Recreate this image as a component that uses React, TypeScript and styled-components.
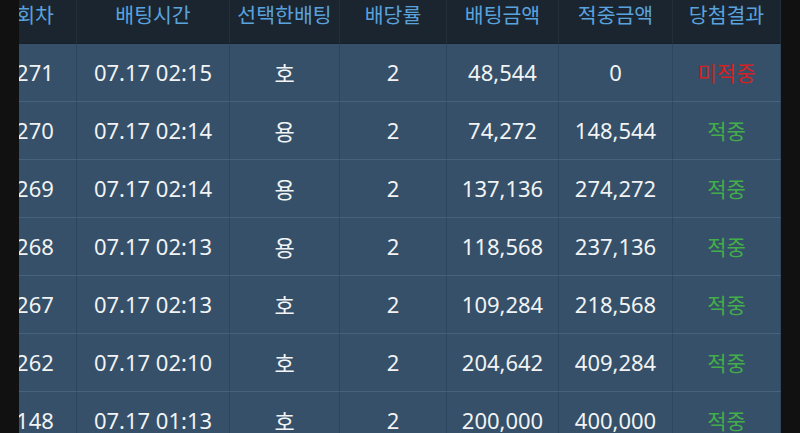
import React from "react";
import styled, { createGlobalStyle } from "styled-components";

const Global = createGlobalStyle`
  html, body { margin: 0; padding: 0; background: #111111; }
  body { font-family: "Noto Sans", "Noto Sans CJK KR", sans-serif; }
`;

const Screen = styled.div`
  width: 800px;
  height: 433px;
  display: flex;
  background: #111111;
  overflow: hidden;
`;

const Side = styled.div`
  width: 19px;
  flex: none;
  background: #111111;
`;

const Viewport = styled.div`
  width: 762px;
  flex: none;
  overflow: hidden;
  background: #355068;
`;

const COLS = "83px 153px 110px 107px 112px 114px 108px";

const Grid = styled.div`
  margin-left: -25px;
  width: 787px;
  display: grid;
  grid-template-columns: ${COLS};
`;

const HeadCell = styled.div`
  height: 44px;
  box-sizing: border-box;
  padding-top: 1px;
  display: flex;
  align-items: flex-start;
  justify-content: center;
  background: #1b2530;
  border-right: 1px solid #222e3a;
  border-bottom: 1px solid #18212a;
  color: #5aa2dc;
  font-size: 20.5px;
  line-height: 28px;
  white-space: nowrap;
  &:last-child { border-right: none; }
`;

const Cell = styled.div<{ $tone?: "win" | "lose" }>`
  height: 58px;
  box-sizing: border-box;
  padding-bottom: 2px;
  display: flex;
  align-items: center;
  justify-content: center;
  border-right: 1px solid #2e465b;
  border-bottom: 1px solid #46637d;
  color: ${(p) => (p.$tone === "win" ? "#43ad4a" : p.$tone === "lose" ? "#d42224" : "#f1f3f4")};
  font-size: ${(p) => (p.$tone ? "21px" : "22px")};
  white-space: nowrap;
`;

type Row = [string, string, string, string, string, string, "win" | "lose"];

const rows: Row[] = [
  ["271", "07.17 02:15", "호", "2", "48,544", "0", "lose"],
  ["270", "07.17 02:14", "용", "2", "74,272", "148,544", "win"],
  ["269", "07.17 02:14", "용", "2", "137,136", "274,272", "win"],
  ["268", "07.17 02:13", "용", "2", "118,568", "237,136", "win"],
  ["267", "07.17 02:13", "호", "2", "109,284", "218,568", "win"],
  ["262", "07.17 02:10", "호", "2", "204,642", "409,284", "win"],
  ["148", "07.17 01:13", "호", "2", "200,000", "400,000", "win"],
];

const heads = ["회차", "배팅시간", "선택한배팅", "배당률", "배팅금액", "적중금액", "당첨결과"];

export default function App() {
  return (
    <>
      <Global />
      <Screen>
        <Side />
        <Viewport>
          <Grid>
            {heads.map((h) => (
              <HeadCell key={h}>{h}</HeadCell>
            ))}
            {rows.map((r) => (
              <React.Fragment key={r[0]}>
                <Cell>{r[0]}</Cell>
                <Cell>{r[1]}</Cell>
                <Cell>{r[2]}</Cell>
                <Cell>{r[3]}</Cell>
                <Cell>{r[4]}</Cell>
                <Cell>{r[5]}</Cell>
                <Cell $tone={r[6]}>{r[6] === "win" ? "적중" : "미적중"}</Cell>
              </React.Fragment>
            ))}
          </Grid>
        </Viewport>
        <Side />
      </Screen>
    </>
  );
}
